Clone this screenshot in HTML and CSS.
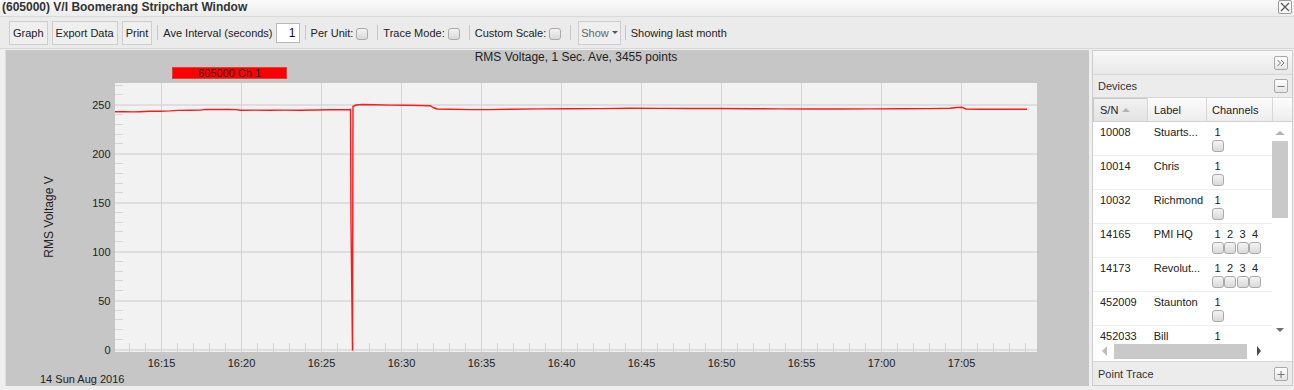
FILE: index.html
```html
<!DOCTYPE html>
<html lang="en">
<head>
<meta charset="UTF-8">
<meta name="viewport" content="width=device-width, initial-scale=1.0">
<title>V/I Boomerang Stripchart Window</title>
<link rel="stylesheet" href="styles.css">
</head>
<body>
<div class="titlebar">
    <span class="title">(605000) V/I Boomerang Stripchart Window</span>
    <span class="tool-btn close-btn"><svg width="10" height="10" viewBox="0 0 10 10"><path d="M1 1L9 9M9 1L1 9" stroke="#555" stroke-width="1.2" fill="none"/></svg></span>
</div>

<div class="toolbar">
    <button class="btn">Graph</button>
    <button class="btn">Export Data</button>
    <button class="btn">Print</button>
    <span class="sep"></span>
    <span class="lbl">Ave Interval (seconds)</span>
    <input class="num" type="text" value="1">
    <span class="sep"></span>
    <span class="lbl">Per Unit:</span><span class="cb"></span>
    <span class="sep"></span>
    <span class="lbl">Trace Mode:</span><span class="cb"></span>
    <span class="sep"></span>
    <span class="lbl">Custom Scale:</span><span class="cb"></span>
    <span class="sep"></span>
    <button class="btn menu-btn">Show <span class="caret"></span></button>
    <span class="sep"></span>
    <span class="lbl">Showing last month</span>
</div>

<div class="main">
    <div class="chart">
        <svg width="1083" height="336" viewBox="6 51 1083 336">
            <text class="chart-title" x="576" y="62">RMS Voltage, 1 Sec. Ave, 3455 points</text>
            <rect x="172.5" y="68.5" width="114" height="11" fill="#ff0000" stroke="#e23c3c"/>
            <text class="legend" x="229.5" y="78">605000 Ch 1</text>

            <rect x="115" y="84" width="922" height="269" fill="#f2f2f2"/>
            <!-- grid -->
            <path d="M115 351H1037M115 302H1037M115 253H1037M115 204H1037M115 155H1037M115 106H1037" stroke="#dedede" stroke-width="2"/>
            <path d="M161.5 84V353M241.5 84V353M321.5 84V353M401.5 84V353M481.5 84V353M561.5 84V353M641.5 84V353M721.5 84V353M801.5 84V353M881.5 84V353M961.5 84V353" stroke="#d4d4d4" stroke-width="1"/>
            <path d="M115 340.5h8M115 330.5h8M115 320.5h8M115 311.5h8M115 291.5h8M115 281.5h8M115 272.5h8M115 262.5h8M115 242.5h8M115 232.5h8M115 223.5h8M115 213.5h8M115 193.5h8M115 184.5h8M115 174.5h8M115 164.5h8M115 144.5h8M115 135.5h8M115 125.5h8M115 115.5h8M115 95.5h8M115 86.5h8" stroke="#d6d6d6" stroke-width="1"/>
            <path d="M129 348.5H1037" stroke="#d6d6d6" stroke-width="9" stroke-dasharray="1 15"/>

            <!-- axis labels -->
            <text class="ytick" x="110.5" y="110">250</text>
            <text class="ytick" x="110.5" y="159">200</text>
            <text class="ytick" x="110.5" y="208">150</text>
            <text class="ytick" x="110.5" y="257">100</text>
            <text class="ytick" x="110.5" y="306">50</text>
            <text class="ytick" x="110.5" y="355">0</text>
            <text class="ytitle" transform="translate(53 218) rotate(-90)">RMS Voltage V</text>

            <text class="xtick" x="161.5" y="368">16:15</text>
            <text class="xtick" x="241.5" y="368">16:20</text>
            <text class="xtick" x="321.5" y="368">16:25</text>
            <text class="xtick" x="401.5" y="368">16:30</text>
            <text class="xtick" x="481.5" y="368">16:35</text>
            <text class="xtick" x="561.5" y="368">16:40</text>
            <text class="xtick" x="641.5" y="368">16:45</text>
            <text class="xtick" x="721.5" y="368">16:50</text>
            <text class="xtick" x="801.5" y="368">16:55</text>
            <text class="xtick" x="881.5" y="368">17:00</text>
            <text class="xtick" x="961.5" y="368">17:05</text>
            <text class="date" x="40" y="384">14 Sun Aug 2016</text>

            <!-- series -->
            <path class="series" d="M115 112.8L125 112.6L133 112.9L140 112.7L150 112.3L160 112.3L170 111.9L178 111.4L190 111.3L200 111.1L206 110.4L215 110.5L228 110.4L236 110.6L240 111.2L255 111.1L270 111.3L285 111.1L300 111.2L315 111L330 110.8L340 110.6L349 110.7L350.5 110.5L351 225L352.5 351L353 107.5L356 106L362 105.5L375 105.8L390 106.1L405 106.3L420 106.5L430 106.7L433 108.5L437 110L450 110.3L470 110.6L490 110.6L510 110.2L540 109.9L570 109.8L600 109.6L630 109.3L660 109.4L690 109.5L720 109.5L750 109.7L780 109.9L810 110L840 110L870 109.9L900 109.8L930 109.6L950 109.3L957 108.5L962 108.3L966 110L980 110.2L1000 110.3L1027 110.3"/>
        </svg>
    </div>

    <div class="side">
        <div class="side-top">
            <span class="tool-btn"><svg width="10" height="10" viewBox="0 0 10 10"><path d="M1.5 2l3 3-3 3M5 2l3 3-3 3" stroke="#777" fill="none"/></svg></span>
        </div>
        <div class="panel-head">
            <span>Devices</span>
            <span class="tool-btn"><svg width="10" height="10" viewBox="0 0 10 10"><path d="M1.5 5.5h7" stroke="#777"/></svg></span>
        </div>
        <div class="grid-head">
            <div class="hcell col-sn sorted">S/N <span class="sort-up"></span></div>
            <div class="hcell col-label">Label</div>
            <div class="hcell col-ch">Channels</div>
            <div class="hcell col-pad"></div>
        </div>
        <div class="grid-body">
            <div class="rows">
                <div class="row">
                    <div class="cell col-sn">10008</div>
                    <div class="cell col-label">Stuarts...</div>
                    <div class="cell col-ch"><div class="chans"><div class="ch"><span>1</span><i class="cb"></i></div></div></div>
                </div>
                <div class="row">
                    <div class="cell col-sn">10014</div>
                    <div class="cell col-label">Chris</div>
                    <div class="cell col-ch"><div class="chans"><div class="ch"><span>1</span><i class="cb"></i></div></div></div>
                </div>
                <div class="row">
                    <div class="cell col-sn">10032</div>
                    <div class="cell col-label">Richmond</div>
                    <div class="cell col-ch"><div class="chans"><div class="ch"><span>1</span><i class="cb"></i></div></div></div>
                </div>
                <div class="row">
                    <div class="cell col-sn">14165</div>
                    <div class="cell col-label">PMI HQ</div>
                    <div class="cell col-ch"><div class="chans">
                        <div class="ch"><span>1</span><i class="cb"></i></div>
                        <div class="ch"><span>2</span><i class="cb"></i></div>
                        <div class="ch"><span>3</span><i class="cb"></i></div>
                        <div class="ch"><span>4</span><i class="cb"></i></div>
                    </div></div>
                </div>
                <div class="row">
                    <div class="cell col-sn">14173</div>
                    <div class="cell col-label">Revolut...</div>
                    <div class="cell col-ch"><div class="chans">
                        <div class="ch"><span>1</span><i class="cb"></i></div>
                        <div class="ch"><span>2</span><i class="cb"></i></div>
                        <div class="ch"><span>3</span><i class="cb"></i></div>
                        <div class="ch"><span>4</span><i class="cb"></i></div>
                    </div></div>
                </div>
                <div class="row">
                    <div class="cell col-sn">452009</div>
                    <div class="cell col-label">Staunton</div>
                    <div class="cell col-ch"><div class="chans"><div class="ch"><span>1</span><i class="cb"></i></div></div></div>
                </div>
                <div class="row">
                    <div class="cell col-sn">452033</div>
                    <div class="cell col-label">Bill</div>
                    <div class="cell col-ch"><div class="chans"><div class="ch"><span>1</span><i class="cb"></i></div></div></div>
                </div>
            </div>
            <div class="vscroll">
                <span class="arrow-up"></span>
                <span class="vthumb"></span>
                <span class="arrow-down"></span>
            </div>
        </div>
        <div class="hscroll">
            <div class="htrack">
                <span class="arrow-left"></span>
                <span class="hthumb"></span>
                <span class="arrow-right"></span>
            </div>
        </div>
        <div class="panel-head point-trace">
            <span>Point Trace</span>
            <span class="tool-btn"><svg width="10" height="10" viewBox="0 0 10 10"><path d="M1.5 5.5h7M5 2v7" stroke="#777"/></svg></span>
        </div>
    </div>
</div>
</body>
</html>
```

FILE: styles.css
```css
/* Window frame */
* {
    box-sizing: border-box;
}
body {
    margin: 0;
    width: 1294px;
    height: 390px;
    overflow: hidden;
    background-color: #efefef;
    font: 11px "Liberation Sans", Arial, sans-serif;
    color: #222;
}
.titlebar {
    height: 17px;
    display: flex;
    justify-content: space-between;
    align-items: flex-start;
    padding: 0 2px;
    background: linear-gradient(#fafafa, #ececec);
    border-bottom: 1px solid #d9d9d9;
}
.title {
    font-weight: bold;
    font-size: 12px;
    line-height: 15px;
    color: #333;
}
.tool-btn {
    width: 14px;
    height: 14px;
    display: flex;
    align-items: center;
    justify-content: center;
    border: 1px solid #a9a9a9;
    border-radius: 2px;
    background: linear-gradient(#ffffff, #e4e4e4);
}
.close-btn {
    background: #f7f7f7;
    border-color: #9a9a9a;
}

/* Toolbar */
.toolbar {
    height: 32px;
    display: flex;
    align-items: center;
    padding-left: 9px;
    background-color: #ebebeb;
    border-bottom: 1px solid #d6d6d6;
}
.btn {
    height: 24px;
    padding: 0 3px;
    border: 1px solid #cdcdcd;
    background-color: #efefef;
    font: inherit;
    color: #222;
}
.btn + .btn {
    margin-left: 4px;
}
.menu-btn {
    margin: 0 -1px 0 2px;
    padding: 0 2px;
    color: #666;
    display: flex;
    align-items: center;
    gap: 3px;
}
.caret {
    border-top: 3px solid #555;
    border-left: 3px solid transparent;
    border-right: 3px solid transparent;
}
.sep {
    width: 1px;
    height: 15px;
    background-color: #c6c6c6;
    margin: 0 5px;
}
.num {
    width: 24px;
    height: 20px;
    margin-left: 3px;
    padding: 0 3px;
    border: 1px solid #b8b8b8;
    background-color: #fff;
    text-align: right;
    font: 12px "Liberation Sans", Arial, sans-serif;
    color: #111;
}
.cb {
    display: block;
    width: 12px;
    height: 12px;
    border: 1px solid #a9a9a9;
    border-radius: 3px;
    background: linear-gradient(#f4f4f4, #d9d9d9);
}
.toolbar .cb {
    margin: 2px 4px 0 3px;
}

/* Chart */
.main {
    display: flex;
    gap: 3px;
    padding: 1px 0 0 5px;
}
.chart {
    width: 1084px;
    height: 336px;
    background-color: #c6c6c6;
    border-left: 1px solid #dedede;
}
.chart svg {
    display: block;
    font-family: "Liberation Sans", Arial, sans-serif;
}
.chart-title {
    font-size: 12px;
    fill: #222;
    text-anchor: middle;
}
.legend {
    font-size: 11px;
    fill: #222;
    text-anchor: middle;
}
.ytick {
    font-size: 11px;
    fill: #222;
    text-anchor: end;
}
.xtick {
    font-size: 11px;
    fill: #222;
    text-anchor: middle;
}
.ytitle {
    font-size: 12px;
    fill: #222;
    text-anchor: middle;
}
.date {
    font-size: 11px;
    fill: #222;
}
.series {
    fill: none;
    stroke: #ff1a1a;
    stroke-width: 1.4;
    stroke-linejoin: round;
}

/* Side panel */
.side {
    width: 201px;
    height: 336px;
    display: flex;
    flex-direction: column;
    border: 1px solid #cdcdcd;
    background-color: #fff;
}
.side-top {
    height: 24px;
    flex: none;
    display: flex;
    justify-content: flex-end;
    align-items: center;
    padding-right: 4px;
    background: linear-gradient(#f8f8f8, #e8e8e8);
    border-bottom: 1px solid #d6d6d6;
}
.panel-head {
    height: 23px;
    flex: none;
    display: flex;
    justify-content: space-between;
    align-items: center;
    padding: 0 4px 0 5px;
    background-color: #ececec;
    border-bottom: 1px solid #d6d6d6;
    color: #333;
}
.point-trace {
    height: 24px;
    border-top: 1px solid #d6d6d6;
    border-bottom: none;
}
.grid-head {
    height: 24px;
    flex: none;
    display: flex;
    background: linear-gradient(#fcfcfc, #ededed);
    border-bottom: 1px solid #d0d0d0;
}
.hcell {
    display: flex;
    align-items: center;
    border-right: 1px solid #d6d6d6;
}
.sorted {
    background: linear-gradient(#f2f2f2, #e3e3e3);
    box-shadow: inset 1px 1px 0 #c8c8c8;
    gap: 4px;
}
.sort-up {
    border-bottom: 4px solid #b5b5b5;
    border-left: 4px solid transparent;
    border-right: 4px solid transparent;
}
.col-sn {
    width: 55px;
    padding-left: 7px;
}
.col-label {
    width: 59px;
    padding-left: 6px;
}
.col-ch {
    width: 66px;
    padding-left: 5px;
}
.col-pad {
    flex: 1;
    border-right: none;
}
.grid-body {
    height: 219px;
    flex: none;
    display: flex;
}
.rows {
    width: 179px;
    overflow: hidden;
}
.row {
    height: 34px;
    display: flex;
    padding-top: 4px;
    border-bottom: 1px solid #ededed;
}
.cell {
    line-height: 13px;
    white-space: nowrap;
}
.chans {
    display: flex;
}
.ch {
    width: 12.5px;
    display: flex;
    flex-direction: column;
    align-items: center;
}
.ch .cb {
    margin-top: 1px;
}

/* Scrollbars */
.vscroll {
    width: 20px;
    display: flex;
    flex-direction: column;
    align-items: center;
    padding-right: 4px;
}
.arrow-up {
    margin-top: 9px;
    border-bottom: 4px solid #b3b3b3;
    border-left: 5px solid transparent;
    border-right: 5px solid transparent;
}
.vthumb {
    width: 16px;
    height: 77px;
    margin-top: 6px;
    background-color: #c9c9c9;
}
.arrow-down {
    margin-top: auto;
    margin-bottom: 9px;
    border-top: 4px solid #6e6e6e;
    border-left: 4px solid transparent;
    border-right: 4px solid transparent;
}
.hscroll {
    height: 20px;
    flex: none;
    display: flex;
}
.htrack {
    width: 179px;
    display: flex;
    align-items: center;
}
.arrow-left {
    margin-left: 9px;
    border-right: 5px solid #bdbdbd;
    border-top: 5px solid transparent;
    border-bottom: 5px solid transparent;
}
.hthumb {
    width: 133px;
    height: 15px;
    margin-left: 7px;
    background-color: #c9c9c9;
}
.arrow-right {
    margin-left: 10px;
    border-left: 4px solid #4a4a4a;
    border-top: 5px solid transparent;
    border-bottom: 5px solid transparent;
}
```
